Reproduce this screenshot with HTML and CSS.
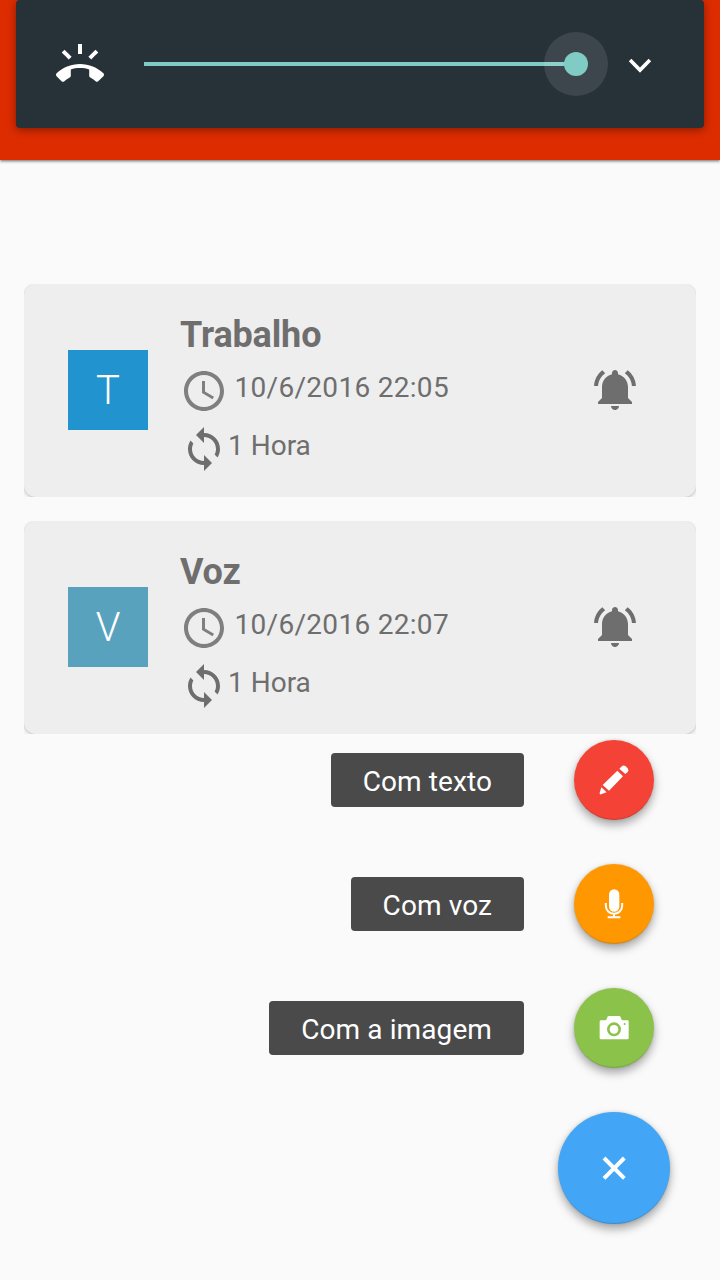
FILE: index.html
```html
<!DOCTYPE html>
<html lang="pt">
<head>
<meta charset="utf-8">
<title>Lembretes</title>
<link rel="stylesheet" href="styles.css">
</head>
<body>
<svg class="defs" width="0" height="0" aria-hidden="true">
  <symbol id="clock" viewBox="0 0 24 24"><path d="M11.99 2C6.47 2 2 6.48 2 12s4.47 10 9.99 10C17.52 22 22 17.52 22 12S17.52 2 11.99 2zM12 20c-4.42 0-8-3.58-8-8s3.58-8 8-8 8 3.58 8 8-3.58 8-8 8zM12.5 7H11v6l5.25 3.15.75-1.23-4.5-2.67z"/></symbol>
  <symbol id="sync" viewBox="0 0 24 24"><path d="M12 4V1L8 5l4 4V6c3.31 0 6 2.69 6 6 0 1.01-.25 1.97-.7 2.8l1.46 1.46C19.54 15.03 20 13.57 20 12c0-4.42-3.58-8-8-8zm0 14c-3.31 0-6-2.69-6-6 0-1.01.25-1.97.7-2.8L5.24 7.74C4.46 8.97 4 10.43 4 12c0 4.42 3.58 8 8 8v3l4-4-4-4v3z"/></symbol>
  <symbol id="bell" viewBox="0 0 24 24"><path d="M6.58 3.58L5.15 2.15C2.76 3.97 1.18 6.8 1.03 10h2c.15-2.65 1.51-4.97 3.55-6.42zM19.97 10h2c-.15-3.2-1.73-6.03-4.13-7.85l-1.43 1.43c2.05 1.45 3.41 3.77 3.56 6.42zm-1.97.5c0-3.07-2.13-5.64-5-6.32V3.5c0-.83-.67-1.5-1.5-1.5S10 2.67 10 3.5v.68c-2.87.68-5 3.25-5 6.32V16l-2 2v1h17v-1l-2-2v-5.5zM11.5 22c.14 0 .27-.01.4-.04.65-.13 1.19-.58 1.44-1.18.1-.24.16-.5.16-.78h-4c0 1.1.9 2 2 2z"/></symbol>
</svg>
<header class="app-bar">
  <div class="volume">
    <svg class="icon" viewBox="0 0 24 24"><path d="M23.71 16.67C20.66 13.78 16.54 12 12 12 7.46 12 3.34 13.78.29 16.67c-.18.18-.29.43-.29.71 0 .28.11.53.29.71l2.48 2.48c.18.18.43.29.71.29.27 0 .52-.11.7-.28.79-.74 1.69-1.36 2.66-1.85.33-.16.56-.5.56-.9v-3.1c1.45-.48 3-.73 4.6-.73s3.15.25 4.6.72v3.1c0 .39.23.74.56.9.98.49 1.87 1.12 2.66 1.85.18.18.43.28.7.28.28 0 .53-.11.71-.29l2.48-2.48c.18-.18.29-.43.29-.71 0-.28-.12-.52-.3-.7zM21.16 6.26l-1.41-1.41-3.56 3.55 1.41 1.41s3.45-3.52 3.56-3.55zM13 2h-2v5h2V2zM6.4 9.81L7.81 8.4 4.26 4.84 2.84 6.26c.11.03 3.56 3.55 3.56 3.55z"/></svg>
    <div class="slider"><div class="track"></div><div class="halo"><div class="thumb"></div></div></div>
    <svg class="icon" viewBox="0 0 48 48"><path d="M15.400 18.700 24 27.400 32.600 18.700 35.200 21.300 24 32.800 12.800 21.300z"/></svg>
  </div>
</header>
<main>
  <section class="list">
    <div class="card-clip"><article class="card">
      <div class="avatar">T</div>
      <div class="info">
        <h2>Trabalho</h2>
        <div class="row date"><svg class="icon faint"><use href="#clock"/></svg><span>10/6/2016 22:05</span></div>
        <div class="row"><svg class="icon"><use href="#sync"/></svg><span>1 Hora</span></div>
      </div>
      <svg class="icon"><use href="#bell"/></svg>
    </article></div>
    <div class="card-clip"><article class="card">
      <div class="avatar teal">V</div>
      <div class="info">
        <h2>Voz</h2>
        <div class="row date"><svg class="icon faint"><use href="#clock"/></svg><span>10/6/2016 22:07</span></div>
        <div class="row"><svg class="icon"><use href="#sync"/></svg><span>1 Hora</span></div>
      </div>
      <svg class="icon"><use href="#bell"/></svg>
    </article></div>
  </section>
  <nav class="menu">
    <div class="action"><span class="label">Com texto</span>
      <button class="fab red" aria-label="Com texto"><svg viewBox="0 0 240 240"><path d="M130 92 147 109 105 152 86 135zM82 142 98 157 81 163Q76 164 77 159zM136 86 142 80Q149 74 155 79L161 85Q166 91 161 96L154 102z"/></svg></button></div>
    <div class="action"><span class="label">Com voz</span>
      <button class="fab orange" aria-label="Com voz"><svg viewBox="0 0 240 240"><rect x="105" y="76" width="31" height="67" rx="15.5"/><path class="line" d="M95.500 117V125A24.500 24.500 0 0 0 144.500 125V117M120 150V160M101 160H139"/></svg></button></div>
    <div class="action"><span class="label">Com a imagem</span>
      <button class="fab green" aria-label="Com a imagem"><svg viewBox="0 0 240 240"><path fill-rule="evenodd" d="M81 97H93Q97 97 98 93L100 88Q101 84 105 84H135Q139 84 140 88L142 93Q143 97 147 97H160Q164 97 164 101V150Q164 154 160 154H81Q77 154 77 150V101Q77 97 81 97zM120 103A21 21 0 1 0 120 145 21 21 0 1 0 120 103zM152 105A3 3 0 1 0 152 111 3 3 0 1 0 152 105z"/><circle cx="120" cy="124" r="13"/></svg></button></div>
    <button class="fab main" aria-label="Fechar"><svg viewBox="0 0 336 336"><path class="cross" d="M138 138 199 199M199 138 138 199"/></svg></button>
  </nav>
</main>
</body>
</html>
```
FILE: styles.css
```css
* { box-sizing: border-box; }
body {
  margin: 0;
  min-height: 1280px;
  background: #fafafa;
  color: #6e6e6e;
  font-family: Roboto, "Noto Sans", sans-serif;
  font-size: 28px;
}
.defs { position: absolute; }
svg { display: block; fill: currentColor; }
.icon { width: 48px; height: 48px; flex: none; }
.faint { color: #7f7f7f; }

.app-bar {
  height: 160px;
  padding: 0 16px;
  background: #dd2c00;
  box-shadow: 0 1px 3px rgba(0, 0, 0, .6);
}
.volume {
  height: 128px;
  padding: 0 40px;
  display: flex;
  align-items: center;
  background: #263238;
  border-radius: 4px;
  box-shadow: 0 2px 8px rgba(0, 0, 0, .4);
  color: #fff;
}
.slider { display: flex; align-items: center; width: 464px; margin: 0 8px 0 40px; }
.track { width: 432px; height: 4px; background: #80cbc4; }
.halo {
  display: flex;
  align-items: center;
  justify-content: center;
  width: 64px;
  height: 64px;
  margin-left: -32px;
  flex: none;
  border-radius: 50%;
  background: rgba(255, 255, 255, .1);
}
.thumb { width: 24px; height: 24px; border-radius: 50%; background: #80cbc4; }

.list { padding: 124px 24px 0; display: flex; flex-direction: column; gap: 24px; }
.card-clip { overflow: hidden; background: #f4f4f4; border-radius: 8px 8px 0 0; }
.card {
  height: 213px;
  padding: 0 56px 1px 44px;
  display: flex;
  align-items: center;
  background: #eee;
  border-radius: 12px;
  box-shadow: 0 1px 3px rgba(0, 0, 0, .22);
}
.avatar {
  width: 80px;
  height: 80px;
  margin-right: 32px;
  background: #2193cf;
  color: #fff;
  font-size: 40px;
  font-weight: 300;
  line-height: 82px;
  text-align: center;
}
.teal { background: #59a2be; }
.info { flex: 1; align-self: flex-start; padding-top: 30px; }
h2 { margin: 0 0 11px; font-size: 36px; line-height: 42px; font-weight: 700; letter-spacing: -.15px; }
.row { display: flex; height: 48px; margin-bottom: 10px; line-height: 42px; }
.date { gap: 6.5px; letter-spacing: .3px; }

.menu { display: flex; flex-direction: column; align-items: flex-end; gap: 44px; padding: 6px 50px 0 0; }
.action { display: flex; align-items: center; gap: 50px; margin-right: 16px; }
.label {
  height: 54px;
  padding: 0 32px;
  border-radius: 4px;
  background: #4a4a4a;
  color: #fff;
  line-height: 58px;
  letter-spacing: .1px;
}
.fab {
  width: 80px;
  height: 80px;
  padding: 0;
  border: 0;
  border-radius: 50%;
  color: #fff;
  box-shadow: 0 5px 10px rgba(0, 0, 0, .34), 0 0 3px rgba(0, 0, 0, .12), inset 0 -2px 1px -1px rgba(0, 0, 0, .15);
}
.red { background: #f44336; }
.orange { background: #ff9800; }
.green { background: #8bc34a; }
.main { width: 112px; height: 112px; background: #42a5f5; }
.line { fill: none; stroke: currentColor; stroke-width: 6; }
.cross { fill: none; stroke: currentColor; stroke-width: 12; }
```
